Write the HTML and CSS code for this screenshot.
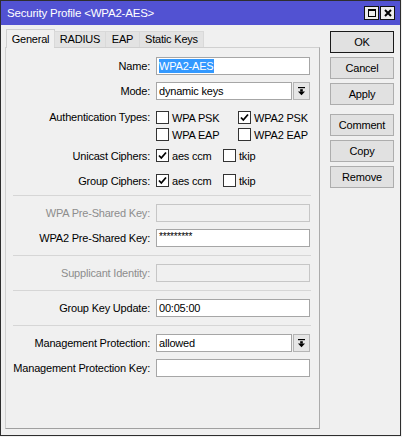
FILE: index.html
```html
<!DOCTYPE html>
<html>
<head>
<meta charset="utf-8">
<title>Security Profile</title>
<link rel="stylesheet" href="styles.css">
</head>
<body>
<div class="window">
  <div class="titlebar">
    <span class="title">Security Profile &lt;WPA2-AES&gt;</span>
    <div class="tb-buttons">
      <span class="tb-btn"><svg width="10" height="10" viewBox="0 0 10 10"><rect x="1.5" y="1.5" width="7" height="7" fill="none" stroke="#000" stroke-width="1"/><rect x="1" y="1" width="8" height="2" fill="#000"/></svg></span>
      <span class="tb-btn"><svg width="10" height="10" viewBox="0 0 10 10"><path d="M2 2 L8 8 M8 2 L2 8" stroke="#000" stroke-width="2" fill="none"/></svg></span>
    </div>
  </div>
  <div class="body">
    <div class="main">
      <div class="tabs">
        <div class="tab active t-general">General</div>
        <div class="tab t-radius">RADIUS</div>
        <div class="tab t-eap">EAP</div>
        <div class="tab t-static">Static Keys</div>
      </div>
      <div class="panel">
        <div class="section s-first">
          <div class="row">
            <span class="lbl">Name:</span>
            <div class="ctl input"><span class="sel">WPA2-AES</span></div>
          </div>
          <div class="row">
            <span class="lbl">Mode:</span>
            <div class="ctl combo">
              <div class="input grow">dynamic keys</div>
              <div class="drop"><svg width="9" height="9" viewBox="0 0 9 9"><rect x="1" y="0" width="7" height="1.2" fill="#000"/><rect x="3.2" y="2.2" width="2.6" height="2.4" fill="#000"/><path d="M1 4.4 L8 4.4 L4.5 8.2 Z" fill="#000"/></svg></div>
            </div>
          </div>
          <div class="row auth">
            <span class="lbl tall">Authentication Types:</span>
            <div class="ctl checks c-auth">
              <div class="cline"><span class="cb"></span>WPA PSK</div>
              <div class="cline"><span class="cb"><svg width="11" height="11" viewBox="0 0 11 11"><path d="M2 5.5 L4.3 8 L9 2.5" stroke="#000" stroke-width="1.8" fill="none"/></svg></span>WPA2 PSK</div>
              <div class="cline"><span class="cb"></span>WPA EAP</div>
              <div class="cline"><span class="cb"></span>WPA2 EAP</div>
            </div>
          </div>
          <div class="row crow r-unicast">
            <span class="lbl">Unicast Ciphers:</span>
            <div class="ctl checks c-ciph">
              <div class="cline"><span class="cb"><svg width="11" height="11" viewBox="0 0 11 11"><path d="M2 5.5 L4.3 8 L9 2.5" stroke="#000" stroke-width="1.8" fill="none"/></svg></span>aes ccm</div>
              <div class="cline"><span class="cb"></span>tkip</div>
            </div>
          </div>
          <div class="row crow r-group">
            <span class="lbl">Group Ciphers:</span>
            <div class="ctl checks c-ciph">
              <div class="cline"><span class="cb"><svg width="11" height="11" viewBox="0 0 11 11"><path d="M2 5.5 L4.3 8 L9 2.5" stroke="#000" stroke-width="1.8" fill="none"/></svg></span>aes ccm</div>
              <div class="cline"><span class="cb"></span>tkip</div>
            </div>
          </div>
        </div>
        <div class="sep"></div>
        <div class="section">
          <div class="row">
            <span class="lbl dis">WPA Pre-Shared Key:</span>
            <div class="ctl input disabled"></div>
          </div>
          <div class="row">
            <span class="lbl">WPA2 Pre-Shared Key:</span>
            <div class="ctl input pw">*********</div>
          </div>
        </div>
        <div class="sep"></div>
        <div class="section">
          <div class="row">
            <span class="lbl dis">Supplicant Identity:</span>
            <div class="ctl input disabled"></div>
          </div>
        </div>
        <div class="sep"></div>
        <div class="section">
          <div class="row">
            <span class="lbl">Group Key Update:</span>
            <div class="ctl input">00:05:00</div>
          </div>
        </div>
        <div class="sep"></div>
        <div class="section">
          <div class="row">
            <span class="lbl">Management Protection:</span>
            <div class="ctl combo">
              <div class="input grow">allowed</div>
              <div class="drop"><svg width="9" height="9" viewBox="0 0 9 9"><rect x="1" y="0" width="7" height="1.2" fill="#000"/><rect x="3.2" y="2.2" width="2.6" height="2.4" fill="#000"/><path d="M1 4.4 L8 4.4 L4.5 8.2 Z" fill="#000"/></svg></div>
            </div>
          </div>
          <div class="row">
            <span class="lbl">Management Protection Key:</span>
            <div class="ctl input"></div>
          </div>
        </div>
      </div>
    </div>
    <div class="buttons">
      <div class="btn default">OK</div>
      <div class="btn">Cancel</div>
      <div class="btn">Apply</div>
      <div class="btn spaced">Comment</div>
      <div class="btn">Copy</div>
      <div class="btn">Remove</div>
    </div>
  </div>
</div>
</body>
</html>
```

FILE: styles.css
```css
* { box-sizing: border-box; }
html, body { margin: 0; padding: 0; background: #f0f0f0; }
body {
  font-family: "Liberation Sans", Arial, sans-serif;
  font-size: 11px;
  letter-spacing: -0.2px;
  color: #000;
  width: 402px;
  height: 437px;
  overflow: hidden;
}
.window {
  width: 401px;
  height: 436px;
  border: 1px solid #2e2e2e;
  background: #f0f0f0;
  display: flex;
  flex-direction: column;
}
.titlebar {
  height: 24px;
  flex: none;
  background: #5252d2;
  color: #fff;
  display: flex;
  align-items: center;
  justify-content: space-between;
  padding: 0 5px 0 6px;
}
.title { font-size: 11.5px; }
.tb-buttons { display: flex; gap: 1px; }
.tb-btn {
  width: 15px;
  height: 14px;
  background: #ececec;
  border: 1px solid #111;
  display: flex;
  align-items: center;
  justify-content: center;
}
.tb-btn svg { display: block; }
.body {
  flex: 1;
  display: flex;
  padding: 0 6px 0 4px;
}
.main {
  width: 315px;
  padding-top: 4px;
  display: flex;
  flex-direction: column;
}
.tabs {
  height: 18px;
  display: flex;
  align-items: flex-end;
  padding-left: 1px;
  position: relative;
  z-index: 2;
}
.tab {
  height: 16px;
  border: 1px solid #d9d9d9;
  border-bottom: none;
  background: #e3e3e3;
  line-height: 14px;
  text-align: center;
  margin-left: -1px;
}
.tab:first-child { margin-left: 0; }
.tab.active {
  height: 19px;
  margin-bottom: -1px;
  background: #f0f0f0;
  padding-top: 2px;
  border-color: #d0d0d0;
}
.t-general { width: 49px; }
.t-radius { width: 52px; }
.t-eap { width: 35px; }
.t-static { width: 65px; }
.panel {
  height: 382px;
  border: 1px solid #d0d0d0;
  border-right-color: #ababab;
  border-bottom-color: #a0a0a0;
  background: #f0f0f0;
  position: relative;
  z-index: 1;
}
.section { padding: 8px 8px 8px 0; }
.section.s-first { padding: 9px 8px 6px 0; }
.sep {
  height: 0;
  border-top: 1px solid #d6d6d6;
  margin: 0 8px 0 7px;
}
.row {
  display: flex;
  align-items: center;
  height: 18px;
  margin-top: 7px;
}
.row:first-child { margin-top: 0; }
.row.auth { height: 34px; align-items: flex-start; margin-top: 9px; }
.row.crow { height: 17px; }
.row.r-unicast { margin-top: 4px; }
.row.r-group { margin-top: 8px; }
.lbl {
  width: 144px;
  flex: none;
  text-align: right;
  white-space: nowrap;
}
.lbl.tall { line-height: 17px; }
.lbl.dis { color: #8d8d8d; }
.ctl {
  margin-left: 6px;
  width: 154px;
  flex: none;
}
.input {
  height: 18px;
  border: 1px solid #a6a6a6;
  background: #fff;
  padding: 0 2px;
  line-height: 16px;
  white-space: nowrap;
  overflow: hidden;
}
.input.disabled { background: #f0f0f0; border-color: #c6c6c6; }
.input.pw { font-size: 10px; line-height: 13px; }
.sel {
  display: inline-block;
  background: #3399ff;
  color: #fff;
  height: 14px;
  line-height: 14px;
  margin-top: 1px;
  padding: 0 1px 0 0;
}
.combo { display: flex; gap: 1px; }
.input.grow { flex: 1; }
.drop {
  width: 17px;
  height: 18px;
  border: 1px solid #b4b4b4;
  background: #e6e6e6;
  display: flex;
  align-items: center;
  justify-content: center;
}
.drop svg { display: block; }
.checks { display: grid; }
.c-auth { grid-template-columns: 82px auto; }
.c-ciph { grid-template-columns: 67px auto; }
.cline {
  height: 17px;
  display: flex;
  align-items: center;
  white-space: nowrap;
}
.cb {
  width: 13px;
  height: 13px;
  border: 1px solid #333;
  background: #fff;
  margin-right: 3px;
  display: flex;
  align-items: center;
  justify-content: center;
  flex: none;
}
.cb svg { display: block; }
.buttons {
  width: 64px;
  margin-left: 10px;
  padding-top: 6px;
  display: flex;
  flex-direction: column;
  gap: 4px;
}
.btn {
  height: 22px;
  border: 1px solid #adadad;
  background: #e1e1e1;
  text-align: center;
  line-height: 20px;
}
.btn.default { border-color: #1a1a1a; }
.btn.spaced { margin-top: 5px; }
```
